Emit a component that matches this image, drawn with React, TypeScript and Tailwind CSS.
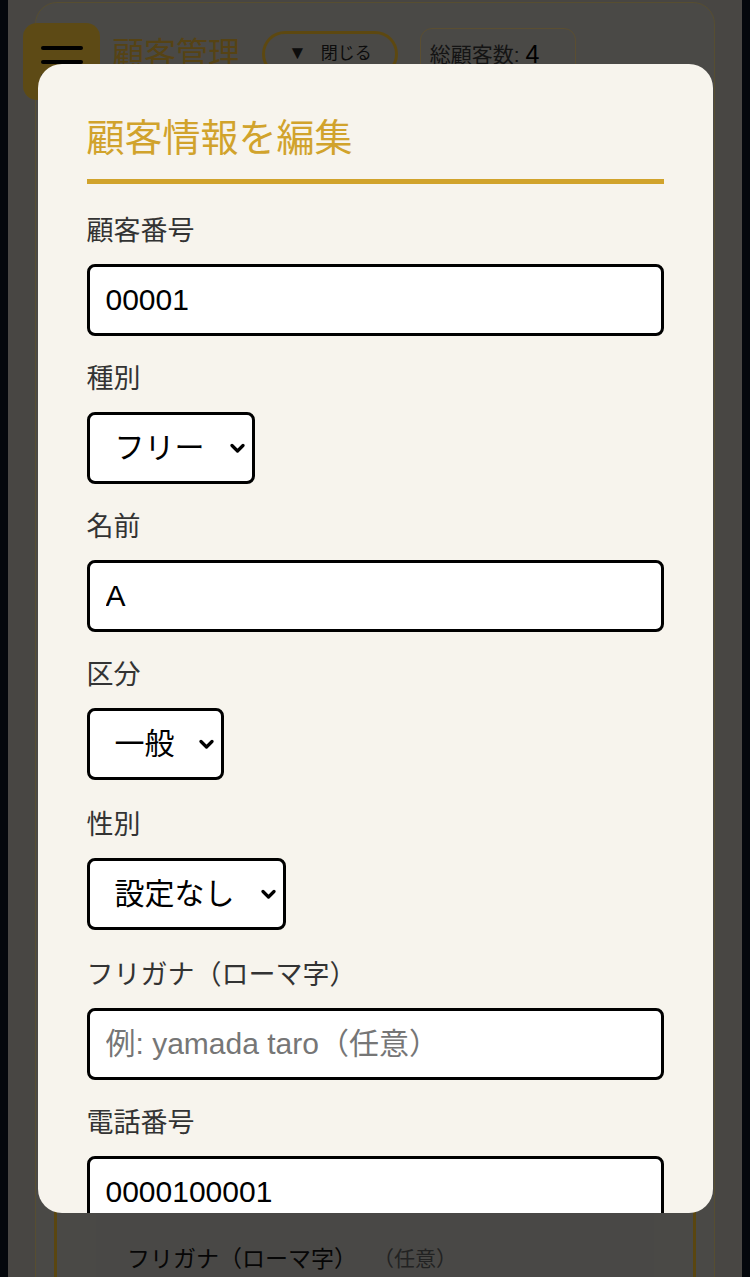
import { useState } from "react";

/**
 * 顧客管理 - 顧客情報を編集モーダル
 * 背景の一覧画面の上にオーバーレイでフォームを表示する
 */

interface FieldProps {
  label: string;
  children: React.ReactNode;
}

function Field({ label, children }: FieldProps) {
  return (
    <div className="pb-[26px]">
      <label className="mb-[15px] block text-[27px] leading-[35px] text-[#333]">{label}</label>
      {children}
    </div>
  );
}

function TextInput({ value, placeholder }: { value?: string; placeholder?: string }) {
  const [v, setV] = useState(value ?? "");
  return (
    <input
      value={v}
      placeholder={placeholder}
      onChange={(e) => setV(e.target.value)}
      className="block h-[72px] w-full rounded-[8px] border-[3px] border-black bg-white px-[16px] text-[30px] text-black outline-none placeholder:text-[#767676]"
    />
  );
}

function Select({ options, width }: { options: string[]; width: string }) {
  return (
    <div className={`relative ${width}`}>
      <select className="block h-[72px] w-full appearance-none rounded-[8px] border-[3px] border-black bg-white pl-[25px] text-[30px] text-black outline-none">
        {options.map((o) => (
          <option key={o}>{o}</option>
        ))}
      </select>
      {/* ネイティブの矢印の代わり */}
      <svg
        className="pointer-events-none absolute right-[10px] top-1/2 -translate-y-1/2"
        width="15"
        height="10"
        viewBox="0 0 15 10"
        fill="none"
      >
        <path d="M2 2.5 L7.5 8 L13 2.5" stroke="#000" strokeWidth="3.2" strokeLinecap="round" strokeLinejoin="round" />
      </svg>
    </div>
  );
}

export default function App() {
  return (
    <div className="min-h-[1277px] bg-[#0a1220] font-['Liberation_Sans','Noto_Sans_CJK_JP',sans-serif]">
      {/* 背景: 顧客一覧ページ */}
      <div className="mx-2 min-h-[1277px] bg-[#b3b0a9] px-[27px] pt-[2px]">
        <div className="min-h-[1275px] rounded-t-[22px] border border-[#d9c27a] bg-[#b8b6af]">
          <div className="flex items-center gap-[22px] pl-[76px] pt-[22px]">
            <h1 className="text-[32px] leading-[44px] text-[#d8a832]">顧客管理</h1>
            <button className="flex h-[46px] items-center gap-[14px] rounded-full border-[3px] border-[#e8b52a] px-[23px] text-[17px] text-[#222]">
              <span className="text-[19px]">▼</span>閉じる
            </button>
            <div className="mt-[3px] flex h-[54px] w-[156px] items-center self-start rounded-[12px] border border-[#e3c37a] pl-[9px] text-[21px] text-[#333]">
              総顧客数:&nbsp;<span className="text-[25px] text-black">4</span>
            </div>
          </div>

          <div className="mx-[18px] mt-[40px] border-x-[3px] border-[#e0ae2a] px-[39px]">
            <div className="bg-[#b6b4ae] px-[31px] pt-[1117px]">
              <div className="flex items-center gap-[16px]">
                <span className="text-[23px] leading-[40px] text-[#111]">フリガナ（ローマ字）</span>
                <span className="text-[21px] leading-[40px] text-[#555]">（任意）</span>
              </div>
            </div>
          </div>
        </div>
      </div>

      {/* ハンバーガーメニュー */}
      <button className="fixed left-[23px] top-[23px] flex h-[77px] w-[77px] flex-col items-center justify-center gap-[10px] rounded-[14px] bg-[#e8ba36]">
        <span className="block h-[4px] w-[42px] rounded bg-black" />
        <span className="block h-[4px] w-[42px] rounded bg-black" />
        <span className="block h-[4px] w-[42px] rounded bg-black" />
      </button>

      {/* モーダル */}
      <div className="fixed inset-0 z-50 flex items-center justify-center bg-black/60">
        <div className="max-h-[90vh] w-[90%] overflow-y-auto rounded-[24px] bg-[#f7f4ed] px-[49px] pb-12 pt-[48px] [scrollbar-width:none]">
          <h2 className="mb-[30px] border-b-[5px] border-[#d1a32c] pb-[14px] text-[38px] leading-[53px] text-[#d1a32c]">
            顧客情報を編集
          </h2>

          <Field label="顧客番号">
            <TextInput value="00001" />
          </Field>
          <Field label="種別">
            <Select options={["フリー", "会員"]} width="w-[168px]" />
          </Field>
          <Field label="名前">
            <TextInput value="A" />
          </Field>
          <Field label="区分">
            <Select options={["一般", "法人"]} width="w-[137px]" />
          </Field>
          <div className="pt-[2px]">
            <Field label="性別">
              <Select options={["設定なし", "男性", "女性"]} width="w-[199px]" />
            </Field>
          </div>
          <div className="pt-[2px]">
            <Field label="フリガナ（ローマ字）">
              <TextInput placeholder="例: yamada taro（任意）" />
            </Field>
          </div>
          <Field label="電話番号">
            <TextInput value="0000100001" />
          </Field>
          <Field label="メールアドレス">
            <TextInput placeholder="例: taro@example.com（任意）" />
          </Field>
          <Field label="備考">
            <TextInput />
          </Field>
        </div>
      </div>
    </div>
  );
}
